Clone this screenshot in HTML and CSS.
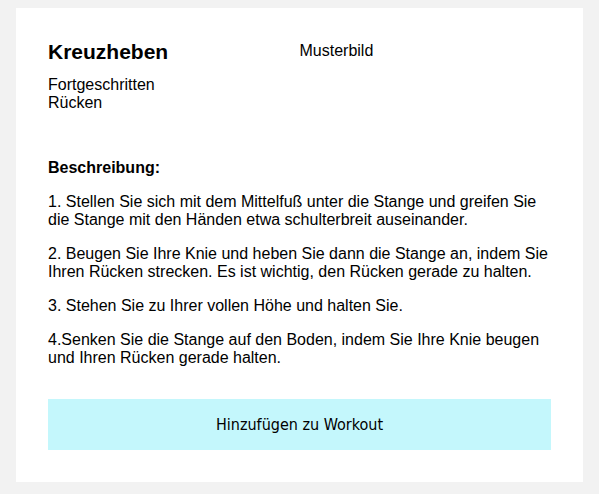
FILE: index.html
```html
<!DOCTYPE html>
<html lang="de">
<head>
<meta charset="utf-8">
<title>Kreuzheben</title>
<link rel="stylesheet" href="styles.css">
</head>
<body>
<main class="card">
  <header class="head">
    <div class="info">
      <h2 class="title">Kreuzheben</h2>
      <div class="meta">
        <div>Fortgeschritten</div>
        <div>Rücken</div>
      </div>
    </div>
    <div class="picture">Musterbild</div>
  </header>
  <section class="desc">
    <p class="desc-title">Beschreibung:</p>
    <p>1. Stellen Sie sich mit dem Mittelfuß unter die Stange und greifen Sie die Stange mit den Händen etwa schulterbreit auseinander.</p>
    <p>2. Beugen Sie Ihre Knie und heben Sie dann die Stange an, indem Sie Ihren Rücken strecken. Es ist wichtig, den Rücken gerade zu halten.</p>
    <p>3. Stehen Sie zu Ihrer vollen Höhe und halten Sie.</p>
    <p>4.Senken Sie die Stange auf den Boden, indem Sie Ihre Knie beugen und Ihren Rücken gerade halten.</p>
  </section>
  <button class="add" type="button">Hinzufügen zu Workout</button>
</main>
</body>
</html>
```

FILE: styles.css
```css
html {
  background: #f2f2f2;
}
body {
  margin: 8px 16px;
  font-family: "Liberation Sans", Arial, sans-serif;
  font-size: 16px;
  line-height: 18px;
  color: #000;
}
.card {
  background: #fff;
  padding: 32px;
  display: flex;
  flex-direction: column;
}
.head {
  display: grid;
  grid-template-columns: 1fr 1fr;
  margin-bottom: 47px;
}
.title {
  margin: 0 0 13px;
  font-size: 21px;
  line-height: 23px;
  font-weight: bold;
}
.picture {
  padding-top: 2px;
}
.desc p {
  margin: 0 0 16px;
}
.desc p:last-child {
  margin-bottom: 0;
}
.desc .desc-title {
  font-weight: bold;
}
.add {
  margin-top: 32px;
  height: 51px;
  border: none;
  background: #c4f7fc;
  color: #000;
  font-family: "DejaVu Sans Condensed", "DejaVu Sans", sans-serif;
  font-stretch: condensed;
  font-size: 16px;
  padding: 0;
}
```
